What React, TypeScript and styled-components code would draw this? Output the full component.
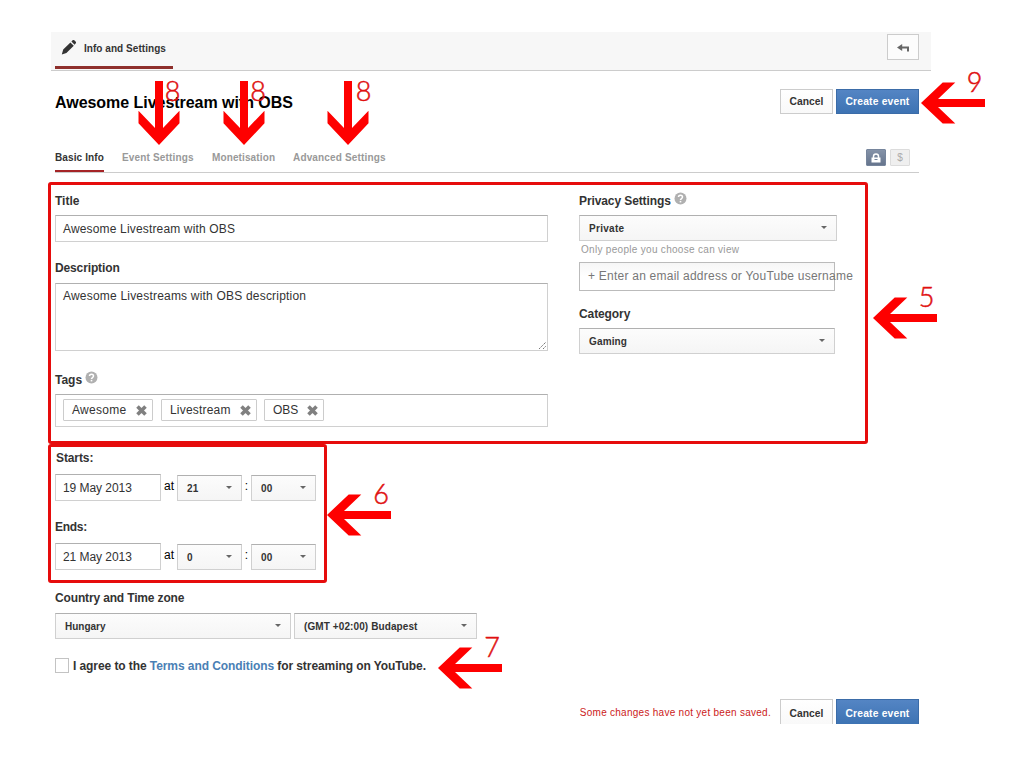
import React from 'react';
import styled, { createGlobalStyle, css } from 'styled-components';

const GlobalStyle = createGlobalStyle`
  * { box-sizing: border-box; }
  body { margin: 0; background: #fff; font-family: "Liberation Sans", Arial, sans-serif; color: #333; }
`;

const field = css`
  border: 1px solid #d0d0d0;
  border-top-color: #b0b0b0;
  background: #fff;
`;

const Page = styled.div`
  position: relative;
  width: 1012px;
  height: 765px;
  padding: 32px 0 0 51px;
  overflow: hidden;
`;

const TopBar = styled.header`
  display: flex;
  justify-content: space-between;
  width: 880px;
  height: 39px;
  padding: 0 12px 0 4px;
  background: #f7f7f7;
  border-bottom: 1px solid #ccc;
`;

const TopTab = styled.div`
  display: flex;
  align-items: flex-start;
  width: 118px;
  height: 37px;
  padding: 7px 0 0 6px;
  border-bottom: 3px solid #8e2f2c;
`;

const Txt = styled.span<{ $ls?: number }>`
  letter-spacing: ${(p) => p.$ls ?? 0}px;
  white-space: nowrap;
`;

const TopTitle = styled(Txt)`
  margin: 3px 0 0 7px;
  font-size: 10px;
  font-weight: bold;
  line-height: 14px;
`;

const BackButton = styled.button`
  display: flex;
  align-items: center;
  justify-content: center;
  width: 32px;
  height: 26px;
  margin-top: 2px;
  padding: 2px 0 0;
  border: 1px solid #ccc;
  background: #fcfcfc;
`;

const Content = styled.main`
  width: 868px;
  padding-left: 4px;
`;

const TitleRow = styled.div`
  display: flex;
  justify-content: space-between;
  height: 43px;
  padding-top: 18px;
`;

const Heading = styled.h1`
  margin: 4px 0 0;
  font-size: 16px;
  line-height: 20px;
  letter-spacing: -0.04px;
  color: #000;
  white-space: nowrap;
`;

const Actions = styled.div`
  display: flex;
  gap: 3px;
  height: 25px;
`;

const Button = styled.button<{ $primary?: boolean; $open?: boolean }>`
  width: ${(p) => (p.$primary ? 83 : 53)}px;
  height: 25px;
  padding: ${(p) => (p.$open ? 3 : 1)}px 0 0;
  border: 1px solid ${(p) => (p.$primary ? '#3b6ca8' : '#ccc')};
  border-bottom-width: ${(p) => (p.$open ? 0 : 1)}px;
  background: ${(p) => (p.$primary ? 'linear-gradient(#5485c4, #3d73b3)' : 'linear-gradient(#fff, #f9f9f9)')};
  color: ${(p) => (p.$primary ? '#fff' : '#333')};
  font: bold 10.3px/22px "Liberation Sans", Arial, sans-serif;
  letter-spacing: ${(p) => (p.$primary ? 0.18 : 0.05)}px;
  white-space: nowrap;
`;

const TabRow = styled.nav`
  display: flex;
  align-items: flex-end;
  gap: 18px;
  height: 59px;
  width: 864px;
  border-bottom: 1px solid #ccc;
`;

const Tab = styled.a<{ $active?: boolean; $ls?: number; $w: number }>`
  width: ${(p) => p.$w}px;
  height: 23px;
  border-bottom: 2px solid ${(p) => (p.$active ? '#a52426' : 'transparent')};
  color: ${(p) => (p.$active ? '#333' : '#999')};
  font-size: 10px;
  font-weight: bold;
  line-height: 18px;
  letter-spacing: ${(p) => p.$ls ?? 0}px;
  white-space: nowrap;
`;

const Badges = styled.div`
  display: flex;
  gap: 4px;
  margin: 0 9px 6px auto;
`;

const Badge = styled.span<{ $on?: boolean }>`
  display: flex;
  align-items: center;
  justify-content: center;
  width: 20px;
  height: 17px;
  border: 1px solid ${(p) => (p.$on ? '#76859c' : '#dcdcdc')};
  border-radius: 1px;
  background: ${(p) => (p.$on ? 'linear-gradient(#8492a8, #66758d)' : '#efefef')};
  color: #aaa;
  font-size: 10px;
`;

const Columns = styled.div`
  display: flex;
  gap: 31px;
  height: 277px;
  padding-top: 20px;
`;

const Column = styled.section<{ $w: number }>`
  width: ${(p) => p.$w}px;
`;

const Label = styled.label<{ $ls?: number; $h?: number }>`
  display: flex;
  align-items: flex-start;
  gap: 3px;
  height: ${(p) => p.$h ?? 22}px;
  font-size: 12px;
  font-weight: bold;
  line-height: 16px;
  letter-spacing: ${(p) => p.$ls ?? 0}px;
  white-space: nowrap;

  svg { margin-top: -1px; }
`;

const TextBox = styled.div<{ $w: number; $h: number; $mb?: number; $pt?: number; $ls?: number }>`
  ${field}
  position: relative;
  width: ${(p) => p.$w}px;
  height: ${(p) => p.$h}px;
  margin-bottom: ${(p) => p.$mb ?? 0}px;
  padding: ${(p) => p.$pt ?? 5}px 7px 0;
  font-size: 12px;
  line-height: 17px;
  letter-spacing: ${(p) => p.$ls ?? 0}px;
  white-space: nowrap;
`;

const Grip = styled.svg`
  position: absolute;
  right: 0;
  bottom: 0;
`;

const TagBox = styled.div`
  ${field}
  display: flex;
  gap: 8px;
  width: 493px;
  height: 33px;
  padding: 4px 7px;
`;

const Tag = styled.span<{ $w: number; $ls?: number }>`
  display: flex;
  align-items: center;
  justify-content: space-between;
  width: ${(p) => p.$w}px;
  height: 22px;
  padding: 0 5px 0 8px;
  border: 1px solid #ccc;
  border-radius: 1px;
  font-size: 12px;
  letter-spacing: ${(p) => p.$ls ?? 0}px;

  &:last-child { margin-left: -1px; }
`;

const SelectBox = styled.div<{ $w: number; $ls?: number }>`
  ${field}
  display: flex;
  align-items: center;
  justify-content: space-between;
  width: ${(p) => p.$w}px;
  height: 26px;
  padding: 0 9px;
  background: linear-gradient(#fcfcfc, #f5f5f5);
  font-size: 10px;
  font-weight: bold;
  letter-spacing: ${(p) => p.$ls ?? 0}px;
  white-space: nowrap;
`;

const Caret = styled.i`
  margin-top: -1px;
  border: 3px solid transparent;
  border-top-color: #666;
  border-bottom: 0;
`;

const Note = styled.p`
  height: 21px;
  margin: 0;
  padding: 2px 0 0 2px;
  color: #999;
  font-size: 10px;
  line-height: 14px;
  white-space: nowrap;
`;

const InviteBox = styled.div`
  width: 256px;
  height: 29px;
  margin-bottom: 15px;
  padding: 0 8px;
  border: 1px solid #bbb;
  background: linear-gradient(#f6f6f6, #fff 50%);
  color: #777;
  font-size: 12px;
  line-height: 26px;
  letter-spacing: 0.235px;
  white-space: nowrap;
`;

const TimeBlock = styled.section<{ $h: number; $indent?: number }>`
  height: ${(p) => p.$h}px;

  > label { padding-left: ${(p) => p.$indent ?? 0}px; }
`;

const TimeRow = styled.div`
  display: flex;
  align-items: flex-end;
  height: 27px;
`;

const Joiner = styled.span<{ $w: number }>`
  width: ${(p) => p.$w}px;
  height: 27px;
  color: #000;
  font-size: 12px;
  line-height: 25px;
  text-align: center;
`;

const Row = styled.div`
  display: flex;
  gap: 3px;
`;

const Agree = styled.label`
  display: flex;
  align-items: center;
  gap: 4px;
  height: 16px;
  margin-top: 18px;
  font-size: 12px;
  font-weight: bold;
  white-space: nowrap;

  > :last-child { padding-top: 1px; }
`;

const Check = styled.span`
  width: 14px;
  height: 15px;
  border: 1px solid #c3c3c3;
`;

const Link = styled.a`
  color: #4a80b5;
`;

const Footer = styled.footer`
  display: flex;
  justify-content: flex-end;
  gap: 9px;
  width: 864px;
  margin-top: 26px;
`;

const Warning = styled.span`
  color: #cc1a1a;
  font-size: 10px;
  line-height: 27px;
  white-space: nowrap;
`;

const Frame = styled.div<{ $x: number; $y: number; $w: number; $h: number }>`
  position: absolute;
  left: ${(p) => p.$x}px;
  top: ${(p) => p.$y}px;
  width: ${(p) => p.$w}px;
  height: ${(p) => p.$h}px;
  border: 3px solid #e60c0c;
  border-radius: 3px;
`;

const ArrowSvg = styled.svg<{ $x: number; $y: number }>`
  position: absolute;
  left: ${(p) => p.$x}px;
  top: ${(p) => p.$y}px;
  overflow: visible;
`;

const Digit = styled.span<{ $x: number; $y: number }>`
  position: absolute;
  left: ${(p) => p.$x - 10}px;
  top: ${(p) => p.$y - 14}px;
  width: 20px;
  color: #e01010;
  font: 300 27px/28px Lato, "Liberation Sans", sans-serif;
  text-align: center;
  -webkit-text-stroke: 0.5px #e01010;
`;

const Help = () => (
  <svg width="13" height="13" viewBox="0 0 13 13">
    <circle cx="6.5" cy="6.5" r="6" fill="#b0b0b0" />
    <path d="M4.5 5.1c0-2.6 4-2.6 4 0 0 1.5-2 1.4-2 3" fill="none" stroke="#fff" strokeWidth="1.5" />
    <rect x="5.7" y="8.9" width="1.6" height="1.5" fill="#fff" />
  </svg>
);

const Remove = () => (
  <svg width="11" height="11" viewBox="0 0 11 11">
    <path d="M1.5 1.5l8 8M9.5 1.5l-8 8" stroke="#808080" strokeWidth="3.6" />
  </svg>
);

const Select = ({ w, ls, children }: { w: number; ls?: number; children: React.ReactNode }) => (
  <SelectBox $w={w} $ls={ls}>
    {children}
    <Caret />
  </SelectBox>
);

const Arrow = ({ x, y, left }: { x: number; y: number; left?: boolean }) => (
  <ArrowSvg $x={x} $y={y} width="1" height="1">
    <polygon
      transform={left ? 'rotate(90)' : undefined}
      points="-20.5,-34.3 -4,-17 -4,-64 4,-64 4,-17 20.5,-34.3 20.5,-21.7 0,0 -20.5,-21.7"
      fill="#fe0000"
    />
  </ArrowSvg>
);

const TimePicker = ({ date, hour }: { date: string; hour: string }) => (
  <TimeRow>
    <TextBox $w={106} $h={27} $ls={-0.05}>{date}</TextBox>
    <Joiner $w={16}>at</Joiner>
    <Select w={65} ls={0.2}>{hour}</Select>
    <Joiner $w={9}>:</Joiner>
    <Select w={65} ls={0.2}>00</Select>
  </TimeRow>
);

export default function App() {
  return (
    <Page>
      <GlobalStyle />
      <TopBar>
        <TopTab>
          <svg width="16" height="16" viewBox="0 0 16 16" fill="#333">
            <path d="M.8 15.4l1.4-5L9.4 3.4l3.4 3.4-7.4 7.2zM10.4 2.5l1.5-1.4q.7-.5 1.4.2l1.5 1.5q.6.7 0 1.4l-1.2 1.6z" />
          </svg>
          <TopTitle $ls={0.05}>Info and Settings</TopTitle>
        </TopTab>
        <BackButton>
          <svg width="12" height="8" viewBox="0 0 12 8">
            <path d="M0 3.5L5.2 0v7z" fill="#666" />
            <path d="M4 3.5h7V7.6" fill="none" stroke="#666" strokeWidth="2" />
          </svg>
        </BackButton>
      </TopBar>

      <Content>
        <TitleRow>
          <Heading>Awesome Livestream with OBS</Heading>
          <Actions>
            <Button>Cancel</Button>
            <Button $primary>Create event</Button>
          </Actions>
        </TitleRow>

        <TabRow>
          <Tab $w={49} $active $ls={0.12}>Basic Info</Tab>
          <Tab $w={72} $ls={0.17}>Event Settings</Tab>
          <Tab $w={63} $ls={0.12}>Monetisation</Tab>
          <Tab $w={93} $ls={0.16}>Advanced Settings</Tab>
          <Badges>
            <Badge $on>
              <svg width="10" height="10" viewBox="0 0 10 10">
                <path d="M2.5 5V3.2a2.5 2.3 0 015 0V5" fill="none" stroke="#fff" strokeWidth="1.5" />
                <rect x=".5" y="4.5" width="9" height="5" fill="#fff" />
                <rect x="3.5" y="6" width="3" height="1" fill="#76859c" />
              </svg>
            </Badge>
            <Badge>$</Badge>
          </Badges>
        </TabRow>

        <Columns>
          <Column $w={493}>
            <Label>Title</Label>
            <TextBox $w={493} $h={27} $mb={18} $ls={0.16}>Awesome Livestream with OBS</TextBox>
            <Label $h={23} $ls={-0.13}>Description</Label>
            <TextBox $w={493} $h={68} $mb={21} $pt={4} $ls={0.2}>
              Awesome Livestreams with OBS description
              <Grip width="9" height="9" viewBox="0 0 9 9">
                <path d="M1 8l7-7M5 8l3-3" stroke="#777" strokeDasharray="1.6 .7" />
              </Grip>
            </TextBox>
            <Label>Tags <Help /></Label>
            <TagBox>
              <Tag $w={90} $ls={0.3}>Awesome <Remove /></Tag>
              <Tag $w={96} $ls={0.2}>Livestream <Remove /></Tag>
              <Tag $w={60}>OBS <Remove /></Tag>
            </TagBox>
          </Column>
          <Column $w={258}>
            <Label $ls={-0.1}>Privacy Settings <Help /></Label>
            <Select w={258} ls={0.3}>Private</Select>
            <Note><Txt $ls={0.3}>Only people you choose can view</Txt></Note>
            <InviteBox>+ Enter an email address or YouTube username</InviteBox>
            <Label $ls={-0.1}>Category</Label>
            <Select w={256} ls={0.15}>Gaming</Select>
          </Column>
        </Columns>

        <TimeBlock $h={69} $indent={1}>
          <Label $h={24} $ls={-0.1}>Starts:</Label>
          <TimePicker date="19 May 2013" hour="21" />
        </TimeBlock>
        <TimeBlock $h={71}>
          <Label $h={24} $ls={-0.3}>Ends:</Label>
          <TimePicker date="21 May 2013" hour="0" />
        </TimeBlock>

        <Label $h={23} $ls={-0.15}>Country and Time zone</Label>
        <Row>
          <Select w={236}>Hungary</Select>
          <Select w={183} ls={0.1}>(GMT +02:00) Budapest</Select>
        </Row>

        <Agree>
          <Check />
          <Txt $ls={-0.08}>I agree to the <Link>Terms and Conditions</Link> for streaming on YouTube.</Txt>
        </Agree>

        <Footer>
          <Warning><Txt $ls={0.27}>Some changes have not yet been saved.</Txt></Warning>
          <Actions>
            <Button $open>Cancel</Button>
            <Button $primary $open>Create event</Button>
          </Actions>
        </Footer>
      </Content>

      <Frame $x={48} $y={182} $w={820} $h={262} />
      <Frame $x={48} $y={444} $w={279} $h={139} />
      <Arrow x={159} y={145} />
      <Arrow x={244} y={145} />
      <Arrow x={348} y={145} />
      <Arrow x={921} y={103.3} left />
      <Arrow x={873} y={317.5} left />
      <Arrow x={327} y={515.3} left />
      <Arrow x={438} y={668.3} left />
      <Digit $x={172.5} $y={91}>8</Digit>
      <Digit $x={258} $y={91}>8</Digit>
      <Digit $x={363.5} $y={91}>8</Digit>
      <Digit $x={974.5} $y={82}>9</Digit>
      <Digit $x={926.5} $y={297}>5</Digit>
      <Digit $x={381} $y={494}>6</Digit>
      <Digit $x={492} $y={647}>7</Digit>
    </Page>
  );
}
